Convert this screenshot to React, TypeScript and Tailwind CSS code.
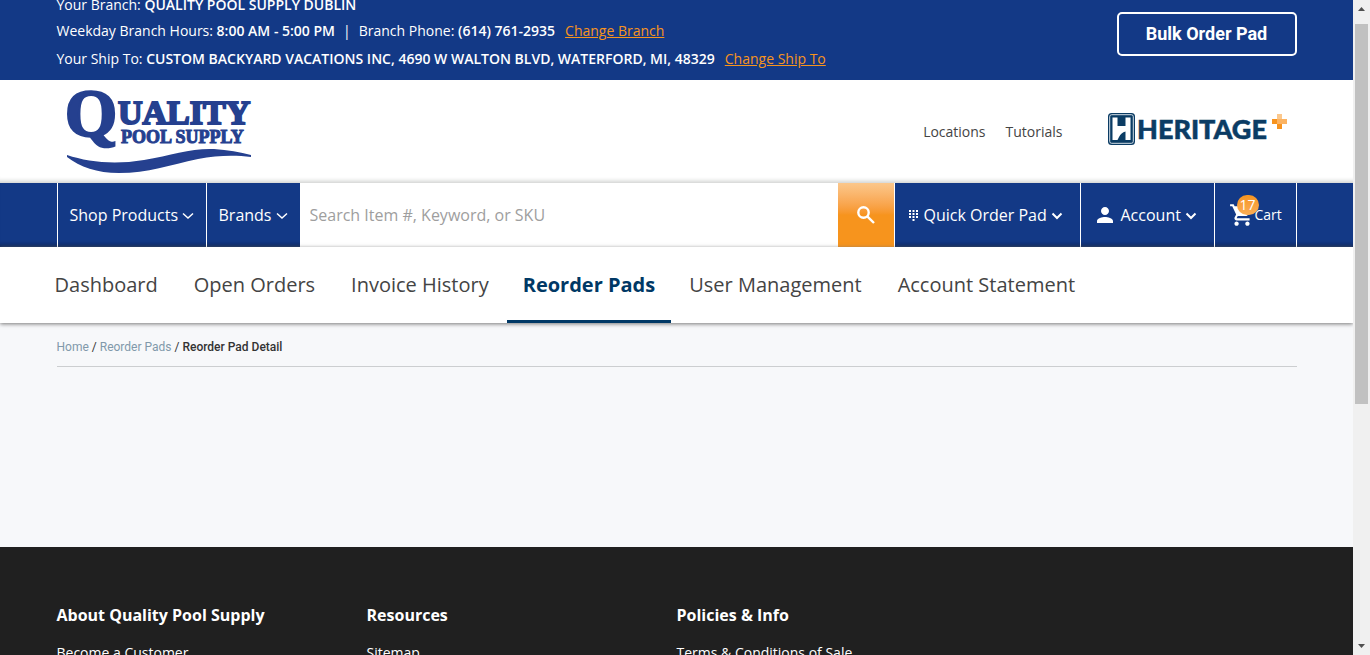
import React from "react";
import { MdPerson, MdShoppingCart } from "react-icons/md";

const container = "mx-auto w-full max-w-[1240px]";
const openSans = "font-['Open_Sans',sans-serif]";

const tabs = [
  "Dashboard",
  "Open Orders",
  "Invoice History",
  "Reorder Pads",
  "User Management",
  "Account Statement",
];

const footerColumns = [
  { title: "About Quality Pool Supply", links: ["Become a Customer"] },
  { title: "Resources", links: ["Sitemap"] },
  { title: "Policies & Info", links: ["Terms & Conditions of Sale"] },
];

function Chevron({ bold = false }: { bold?: boolean }) {
  return (
    <svg
      className="mt-0.5 h-2 w-3 shrink-0"
      viewBox="0 0 12 8"
      fill="none"
      stroke="currentColor"
      strokeWidth={bold ? 2 : 1.5}
      aria-hidden="true"
    >
      <path d={bold ? "M1.500 1.500L6 6L10.500 1.500" : "M1 1.500L6 6L11 1.500"} />
    </svg>
  );
}

function SearchIcon() {
  return (
    <svg
      className="size-[18px]"
      viewBox="0 0 18 18"
      fill="none"
      stroke="currentColor"
      strokeWidth="2.400"
      aria-hidden="true"
    >
      <circle cx="6.500" cy="6.500" r="5.200" />
      <path d="M10.300 10.300L17 17" />
    </svg>
  );
}

function KeypadIcon() {
  return (
    <svg className="mr-1.5 h-[11px] w-[9px] shrink-0" viewBox="0 0 9 11" fill="currentColor" aria-hidden="true">
      <path d="M0 0H2V2H0ZM3.500 0H5.500V2H3.500ZM7 0H9V2H7ZM0 3H2V5H0ZM3.500 3H5.500V5H3.500ZM7 3H9V5H7ZM0 6H2V8H0ZM3.500 6H5.500V8H3.500ZM7 6H9V8H7ZM3.500 9H5.500V11H3.500Z" />
    </svg>
  );
}

function QualityLogo() {
  return (
    <svg
      className="h-[84px] w-[186px] overflow-visible"
      viewBox="0 0 186 84"
      fill="#25408f"
      stroke="#25408f"
      role="img"
      aria-label="Quality Pool Supply"
    >
      <g fontWeight="700" fontFamily="Liberation Serif, serif">
        <text x="-1" y="45.500" fontSize="67" strokeWidth="2.500">
          Q
        </text>
        <text x="52" y="34" fontSize="34" strokeWidth="2">
          UALITY
        </text>
        <text x="55" y="53" fontSize="18" strokeWidth="1">
          POOL SUPPLY
        </text>
      </g>
      <path
        stroke="none"
        d="M1 65C22 72 48 75 78 70C106 65 126 58 148 59C162 60 174 62 185 65V67C170 65 152 65 132 69C104 75 82 83 53 83C31 83 14 77 1 67Z"
      />
    </svg>
  );
}

function HeritageLogo() {
  return (
    <svg
      className="h-[34px] w-[182px]"
      viewBox="0 0 182 34"
      role="img"
      aria-label="Heritage Plus"
    >
      <rect x="1" y="1" width="27" height="32" rx="3.500" fill="#0b3c64" />
      <rect x="2.700" y="2.700" width="23.600" height="28.600" rx="2" fill="none" stroke="#d5dfe7" strokeWidth="1" />
      <path
        fill="#fff"
        d="M5.500 5.500H10.500V14H18.500V5.500H23.500V28H18.500V19.500C15.500 20.500 13.500 22 12 25L10.500 28H5.500Z"
      />
      <text
        x="30"
        y="26.500"
        fill="#0b3c64"
        stroke="#0b3c64"
        strokeWidth="0.500"
        fontFamily="Lato, sans-serif"
        fontWeight="900"
        fontSize="27"
      >
        HERITAGE
      </text>
      <path fill="#fbb363" d="M170 2H175V7H180V12H175V17H170V12H165V7H170Z" />
      <path fill="#f7931e" d="M165 7H170V12H175V17H170V12H165Z" />
      <path fill="#fcc88c" d="M170 2H175V7H170Z" />
    </svg>
  );
}

function BranchBar() {
  return (
    <div className={`h-20 overflow-hidden bg-[#133986] text-white ${openSans}`}>
      <div className={`${container} flex h-full items-end justify-between text-sm`}>
        <div className="pb-[7px] leading-7">
          <p className="-mb-0.5">
            Your Branch: <b className="font-semibold">QUALITY POOL SUPPLY DUBLIN</b>
          </p>
          <p className="flex">
            <span>
              Weekday Branch Hours: <b className="font-semibold">8:00 AM - 5:00 PM</b>
            </span>
            <span className="px-2">|</span>
            <span>
              Branch Phone: <b className="font-semibold">(614) 761-2935</b>
            </span>
            <a href="#branch" className="ml-2.5 text-[#f7941d] underline">
              Change Branch
            </a>
          </p>
          <p className="flex">
            <span>
              Your Ship To:{" "}
              <b className="font-semibold">
                CUSTOM BACKYARD VACATIONS INC, 4690 W WALTON BLVD, WATERFORD, MI, 48329
              </b>
            </span>
            <a href="#ship-to" className="ml-2.5 text-[#f7941d] underline">
              Change Ship To
            </a>
          </p>
        </div>
        <button
          type="button"
          className="mb-6 h-11 w-[180px] rounded-[5px] border-2 border-white font-['Roboto',sans-serif] text-lg font-bold"
        >
          Bulk Order Pad
        </button>
      </div>
    </div>
  );
}

function LogoBar() {
  return (
    <div className="h-[103px] bg-white shadow-[inset_0_-6px_4px_-4px_#cfd1cf]">
      <div className={`${container} flex h-full items-start justify-between`}>
        <a href="#home" className="ml-[9px] mt-2.5">
          <QualityLogo />
        </a>
        <div className={`mr-2 mt-8 flex items-center text-sm text-[#444] ${openSans}`}>
          <div className="mr-11 flex gap-5 pt-1.5">
            <a href="#locations">Locations</a>
            <a href="#tutorials">Tutorials</a>
          </div>
          <a href="#heritage">
            <HeritageLogo />
          </a>
        </div>
      </div>
    </div>
  );
}

function MainNav() {
  return (
    <nav className={`bg-[#133986] text-base text-white shadow-[inset_0_-6px_4px_-4px_#0c2352] ${openSans}`}>
      <div className={`${container} flex h-16`}>
        <button type="button" className="flex w-[149px] items-center gap-1 border-l border-white pl-3">
          Shop Products <Chevron />
        </button>
        <button type="button" className="flex w-[94px] items-center gap-1 border-l border-white pl-3">
          Brands <Chevron />
        </button>
        <form className="flex min-w-0 flex-1">
          <input
            type="search"
            aria-label="Search"
            placeholder="Search Item #, Keyword, or SKU"
            className="min-w-0 flex-1 bg-white px-2.5 text-[#333] placeholder:text-[#9e9e9e]"
          />
          <button
            type="button"
            aria-label="Submit search"
            className="flex w-14 items-center justify-center bg-linear-to-b from-[#fbc78b] to-[#f7941d] to-50%"
          >
            <SearchIcon />
          </button>
        </form>
        <button type="button" className="flex w-[186px] items-center border-l border-white pl-3.5">
          <KeypadIcon />
          <span className="mr-1">Quick Order Pad</span>
          <Chevron bold />
        </button>
        <button type="button" className="flex w-[134px] items-center border-l border-white pl-3">
          <MdPerson className="mr-1 size-6" />
          <span className="mr-1">Account</span>
          <Chevron bold />
        </button>
        <a href="#cart" className="flex w-[83px] items-center border-x border-white pl-3.5 text-sm">
          <span className="relative">
            <MdShoppingCart className="size-[26px]" />
            <span className="absolute -top-[7px] left-2 flex h-5 w-[22px] items-center justify-center rounded-full bg-linear-to-b from-[#f7941d] to-[#faae55]">
              17
            </span>
          </span>
          Cart
        </a>
      </div>
    </nav>
  );
}

function AccountTabs() {
  return (
    <nav className={`relative z-10 bg-white shadow-[0_1px_4px_#777] ${openSans}`}>
      <div className={`${container} flex h-[76px]`}>
        <div className="-ml-5 flex text-xl text-[#444]">
          {tabs.map((tab) => (
            <a
              key={tab}
              href={`#${tab}`}
              className={
                tab === "Reorder Pads"
                  ? "flex items-center border-b-[3px] border-[#003865] px-4 pt-[3px] font-bold text-[#003865]"
                  : "flex items-center px-[18px]"
              }
            >
              {tab}
            </a>
          ))}
        </div>
      </div>
    </nav>
  );
}

function Content() {
  return (
    <main className="h-56 bg-[#f7f8fa]">
      <div className={container}>
        <div className="flex h-11 items-center gap-[3px] border-b border-[#ccced0] pt-1 font-['Roboto',sans-serif] text-xs text-[#333]">
          <a href="#home" className="text-[#8199aa]">
            Home
          </a>
          <span>/</span>
          <a href="#reorder-pads" className="text-[#8199aa]">
            Reorder Pads
          </a>
          <span>/</span>
          <span className="font-medium">Reorder Pad Detail</span>
        </div>
      </div>
    </main>
  );
}

function Footer() {
  return (
    <footer className={`flex-1 bg-[#202020] pt-14 text-white ${openSans}`}>
      <div className={`${container} grid grid-cols-4`}>
        {footerColumns.map((column) => (
          <section key={column.title}>
            <h2 className="text-base font-bold">{column.title}</h2>
            <ul className="mt-4 text-sm">
              {column.links.map((link) => (
                <li key={link}>
                  <a href="#footer">{link}</a>
                </li>
              ))}
            </ul>
          </section>
        ))}
      </div>
    </footer>
  );
}

function ScrollRail() {
  return (
    <div className="flex w-[17px] shrink-0 flex-col items-center bg-[#f0f0f0]" aria-hidden="true">
      <svg className="h-6 w-[17px]" viewBox="0 0 17 24" fill="#505050">
        <path d="M5 11L8.500 7L12 11Z" />
      </svg>
      <div className="h-[380px] w-[13px] bg-[#c1c1c1]" />
      <svg className="mt-auto h-[17px] w-[17px]" viewBox="0 0 17 17" fill="#505050">
        <path d="M5 6L8.500 10L12 6Z" />
      </svg>
    </div>
  );
}

export default function App() {
  return (
    <div className="flex h-screen overflow-hidden">
      <div className="flex min-w-0 flex-1 flex-col overflow-hidden *:shrink-0">
        <BranchBar />
        <LogoBar />
        <MainNav />
        <AccountTabs />
        <Content />
        <Footer />
      </div>
      <ScrollRail />
    </div>
  );
}
